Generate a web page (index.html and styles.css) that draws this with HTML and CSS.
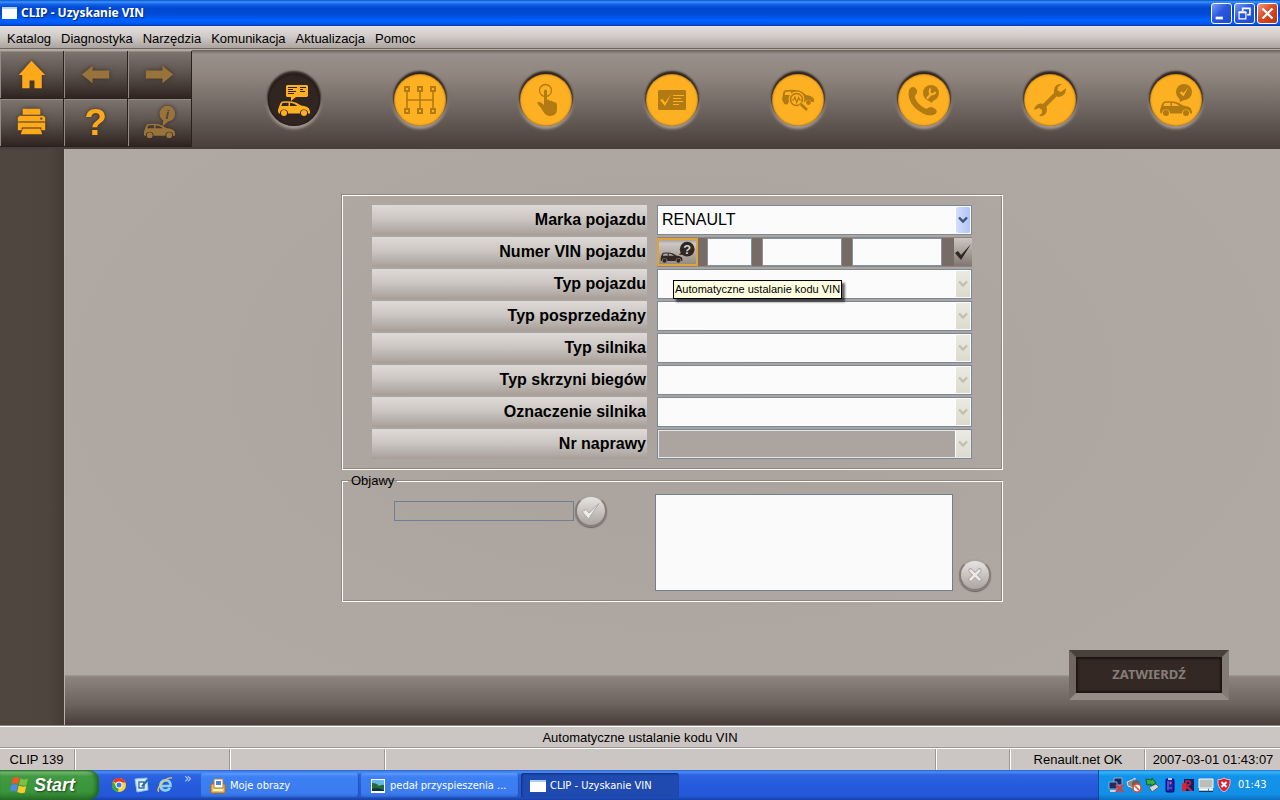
FILE: index.html
```html
<!DOCTYPE html>
<html lang="pl">
<head>
<meta charset="utf-8">
<title>CLIP - Uzyskanie VIN</title>
<link rel="stylesheet" href="styles.css">
</head>
<body>
<svg class="defs" aria-hidden="true">
  <symbol id="car" viewBox="0 0 32 15">
    <path fill-rule="evenodd" d="M4 .5Q8 0 14 .5Q18 1 23 4.500Q29 5.200 31 7.500L31.500 9L32 10.500V12.500H30A4 4 0 0 0 22 12.500H10A4 4 0 0 0 2 12.500H.8Q0 12 0 9L1.300 5Q2.500 1 4 .5ZM4.500 2L3.300 5H10.500V1.700Q7 1.500 4.500 2ZM12 1.700V5H19.500Q16.500 2 12 1.700Z"/>
    <circle cx="6" cy="12" r="3"/><circle cx="26" cy="12" r="3"/>
  </symbol>
  <symbol id="down" viewBox="0 0 10 8"><path d="M1 1.500L5 5.500L9 1.500" fill="none" stroke="currentColor" stroke-width="2.400"/></symbol>
</svg>

<header class="titlebar">
  <span class="app-icon"></span>
  <h1 class="title">CLIP - Uzyskanie VIN</h1>
  <div class="window-buttons">
    <button class="win" aria-label="Minimalizuj"><svg viewBox="0 0 21 21"><path d="M4 14h8v3H4z" fill="#fff"/></svg></button>
    <button class="win" aria-label="Przywróć"><svg viewBox="0 0 21 21" fill="none" stroke="#fff"><path d="M8.500 8V4.800h8v7H13.500" stroke-width="1.800"/><path d="M4.500 9.500h7.500v7h-7.500z" stroke-width="1.300"/><path d="M4 9h8.500" stroke-width="2"/></svg></button>
    <button class="win close" aria-label="Zamknij"><svg viewBox="0 0 21 21"><path d="M5 5l11 11M16 5l-11 11" stroke="#fff" stroke-width="2.500"/></svg></button>
  </div>
</header>

<nav class="menu">
  <button>Katalog</button><button>Diagnostyka</button><button>Narzędzia</button><button>Komunikacja</button><button>Aktualizacja</button><button>Pomoc</button>
</nav>

<div class="ribbon">
  <div class="tools">
    <button aria-label="Strona główna"><svg viewBox="0 0 64 48"><path d="M32 10L46 24.500H42.500V38H35V30H30V38H22.500V24.500H19Z"/></svg></button>
    <button aria-label="Wstecz" disabled><svg viewBox="0 0 64 48"><path d="M18 24L29 15V20H46V28H29V33Z"/></svg></button>
    <button aria-label="Dalej" disabled><svg viewBox="0 0 64 48"><path d="M46 24L35 15V20H18V28H35V33Z"/></svg></button>
    <button aria-label="Drukuj"><svg viewBox="0 0 64 48"><path d="M24 10H40L41 11V16H23V10ZM20 17H44L46 19V23H18V19ZM18 24H46V32H42V29H22V32H18ZM23 30H41L43 36H21Z"/><path d="M41 19h2v2h-2z" fill="#4a3f39"/></svg></button>
    <button aria-label="Pomoc"><svg viewBox="0 0 64 48"><text x="32" y="37" font-size="38" text-anchor="middle" class="glyph">?</text></svg></button>
    <button aria-label="Informacje o pojeździe" disabled><svg viewBox="0 0 64 48"><use href="#car" x="16" y="25" width="32" height="15"/><path d="M36 20L35 28L42 22Z"/><circle cx="40" cy="15" r="8"/><text x="40" y="20" font-size="14" text-anchor="middle" class="glyph info">i</text></svg></button>
  </div>
  <div class="modes">
    <button class="mode active" aria-label="Identyfikacja"><svg viewBox="0 0 52 52"><use href="#car" x="10" y="27" width="32" height="15"/><path d="M19 11H39L40 12V22L39 23H28L23 27V23H19L18 22V12Z"/><path d="M20 13.500h9M20 15.500h5M20 17.500h8M20 19.500h6M32 13.500h6M32 15.500h3M32 17.500h5" stroke="#302520" fill="none"/></svg></button>
    <button class="mode" aria-label="Układy"><svg viewBox="0 0 52 52"><path d="M13 17V35M26 17V35M39 17V35M13 26H39" fill="none" stroke="#b27a12" stroke-width="1.600"/><path d="M11 13h4v4h-4zM24 13h4v4h-4zM37 13h4v4h-4zM11 35h4v4h-4zM24 35h4v4h-4zM37 35h4v4h-4z" class="node"/></svg></button>
    <button class="mode" aria-label="Sterowanie"><svg viewBox="0 0 52 52"><circle cx="25.500" cy="16.500" r="6" fill="none" stroke="#b27a12" stroke-width="1.300"/><path d="M24 17Q24 15.500 25.500 15.500Q27 15.500 27 17V26Q29 25.300 30 27Q32.300 26.300 33 28Q36.500 27.500 37 31V35Q37 42 30 42Q26 42 23.500 38Q21 33.500 17.500 29.500Q16.800 28 19 27.700Q21 28 24 31Z"/></svg></button>
    <button class="mode" aria-label="Lista kontrolna"><svg viewBox="0 0 52 52"><rect x="12" y="16" width="28" height="20" rx="1.500"/><path d="M14 26L16.500 25L19 28.500L25.500 20L19 32Z" fill="#fdb022"/><path d="M27 21.500h11M27 24.500h8M27 27.500h10M27 30.500h6" stroke="#fdb022"/></svg></button>
    <button class="mode" aria-label="Analiza"><svg viewBox="0 0 52 52"><path fill-rule="evenodd" d="M12 16.500Q19 15 27 16.500Q31 17.500 34 21Q40 21.500 42 25V28H39.500A3.500 3.500 0 0 0 33 28H11.500Q9.500 27 10.500 23Q11 18 12 16.500ZM13.500 18L12.500 21H19V17.500Z"/><circle cx="36.500" cy="28.500" r="2.400"/><circle cx="14" cy="28" r="2.500"/><circle cx="24.500" cy="25.500" r="8" fill="#fdb022"/><circle cx="24.500" cy="25.500" r="6" fill="none" stroke="#b27a12" stroke-width="1.500"/><path d="M19.500 26h2l1.500-3l1.700 5.500l2-5l1 2.500h2" fill="none" stroke="#b27a12" stroke-width="1.200"/><path d="M28.500 30L35 36" stroke="#fdb022" stroke-width="5"/><path d="M28.800 30L35 36" stroke="#b27a12" stroke-width="2.800"/></svg></button>
    <button class="mode" aria-label="Asystent"><svg viewBox="0 0 52 52"><path d="M11.500 15Q14 12 17 13.500Q20.500 17 18 20.500Q16 22 17.500 25Q20.500 31 26.500 34Q29 35.500 31 33.500Q34 32 36.500 34.500Q40 36.500 38 39.500Q33 43.500 25 39.500Q14 34 11 24Q10 18 11.500 15Z"/><path d="M29 25L33.500 29L37 24Z"/><circle cx="33" cy="19" r="8"/><path d="M29.500 24L33 20" stroke="#fdb022" stroke-width="2.200" stroke-linecap="round"/><path d="M32.500 14.500Q30.500 18.500 33 20Q36 21 37.500 18" fill="none" stroke="#fdb022" stroke-width="2"/></svg></button>
    <button class="mode" aria-label="Narzędzia serwisowe"><svg viewBox="0 0 52 52"><path d="M18 34L34 18" stroke="#b27a12" stroke-width="4.500"/><path d="M38 10Q31 9 30 16Q29 22 35 23Q42 22 42 14L37 18L33.500 16.500L34 13Z"/><path d="M15 42Q22 43 23 36Q23 30 17 29.500Q11 30 10 36L15 34L18 36L18 39Z"/></svg></button>
    <button class="mode" aria-label="Kontrola końcowa"><svg viewBox="0 0 52 52"><use href="#car" x="10" y="27" width="32" height="15"/><path d="M29 23L30 28L38 24Z"/><circle cx="34" cy="18" r="8"/><path d="M29.500 18.500L32 17.500L33.500 19L38.500 13L33.500 22.500Z" fill="#fdb022"/></svg></button>
  </div>
</div>

<div class="body">
  <aside class="side"></aside>
  <main class="main">
    <form class="content">
      <section class="group vehicle">
        <div class="row"><label for="brand">Marka pojazdu</label><div class="field combo"><select id="brand"><option>RENAULT</option></select><span class="arrow live"><svg><use href="#down"/></svg></span></div></div>
        <div class="row"><label for="vin1">Numer VIN pojazdu</label>
          <div class="field vin">
            <button type="button" class="auto" aria-label="Automatyczne ustalanie kodu VIN"><svg viewBox="0 0 37 26"><use href="#car" x="0" y="13" width="24" height="12"/><path d="M24 12L20 16L30 16Z"/><circle cx="29" cy="10" r="8"/><text x="29" y="15" font-size="14" text-anchor="middle" class="glyph mark">?</text></svg></button>
            <input class="v1" id="vin1" type="text"><input class="v2" type="text" aria-label="VIN, część 2"><input class="v3" type="text" aria-label="VIN, część 3">
            <button type="button" class="confirm" aria-label="Potwierdź VIN"><svg viewBox="0 0 18 28"><path d="M1 15L4 13L7 17L17 6L7 22Z"/></svg></button>
          </div>
        </div>
        <div class="row"><label for="type">Typ pojazdu</label><div class="field combo"><select id="type" disabled><option></option></select><span class="arrow"><svg><use href="#down"/></svg></span><span class="tooltip" role="tooltip">Automatyczne ustalanie kodu VIN</span></div></div>
        <div class="row"><label for="sales">Typ posprzedażny</label><div class="field combo"><select id="sales" disabled><option></option></select><span class="arrow"><svg><use href="#down"/></svg></span></div></div>
        <div class="row"><label for="engine">Typ silnika</label><div class="field combo"><select id="engine" disabled><option></option></select><span class="arrow"><svg><use href="#down"/></svg></span></div></div>
        <div class="row"><label for="gearbox">Typ skrzyni biegów</label><div class="field combo"><select id="gearbox" disabled><option></option></select><span class="arrow"><svg><use href="#down"/></svg></span></div></div>
        <div class="row"><label for="mark">Oznaczenie silnika</label><div class="field combo"><select id="mark" disabled><option></option></select><span class="arrow"><svg><use href="#down"/></svg></span></div></div>
        <div class="row"><label for="repair">Nr naprawy</label><div class="field combo clear"><select id="repair" disabled><option></option></select><span class="arrow"><svg><use href="#down"/></svg></span></div></div>
      </section>
      <fieldset class="group symptoms">
        <legend>Objawy</legend>
        <div class="symptom-grid">
          <div class="entry"><input type="text" aria-label="Objaw"><button type="button" class="round" aria-label="Dodaj"><svg viewBox="0 0 28 28"><path d="M5 14.500L9 12.500L12 16L22 6.500L11.500 22Z" fill="#eeebe9" stroke="#b0aaa6"/></svg></button></div>
          <textarea aria-label="Lista objawów"></textarea>
          <button type="button" class="round remove" aria-label="Usuń"><svg viewBox="0 0 28 28"><path d="M9.500 9.500L18.500 18.500M18.500 9.500L9.500 18.500" stroke="#aaa4a0" stroke-width="4.500" stroke-linecap="round"/><path d="M9.500 9.500L18.500 18.500M18.500 9.500L9.500 18.500" stroke="#ebe8e6" stroke-width="2.500" stroke-linecap="round"/></svg></button>
        </div>
      </fieldset>
    </form>
    <div class="actions"><button class="submit" disabled>ZATWIERDŹ</button></div>
  </main>
</div>

<div class="hint">Automatyczne ustalanie kodu VIN</div>
<div class="status">
  <span class="s-small">CLIP 139</span><span class="s-mid"></span><span class="s-mid"></span><span class="s-fill"></span><span class="s-gap"></span><span class="s-net">Renault.net OK</span><span class="s-date">2007-03-01 01:43:07</span>
</div>

<footer class="taskbar">
  <button class="start"><svg viewBox="0 0 20 20"><path d="M3 3Q6 1 9.500 3L8 9Q5 7.500 1.500 9Z" fill="#f0582a"/><path d="M10.500 3.500Q14 5.500 18 3.500L16.500 10Q13 11.500 9 9.500Z" fill="#7cc142"/><path d="M1.200 10Q4.500 8.500 7.800 10L6.300 16.500Q3 15 0 16.500Z" fill="#4f87e8"/><path d="M8.800 10.500Q12.500 12.500 16.200 11L14.800 17.500Q11 19 7.200 17Z" fill="#fbcb2d"/></svg><span>Start</span></button>
  <div class="quick">
    <button aria-label="Chrome"><svg viewBox="0 0 16 16"><circle cx="8" cy="8" r="7" fill="#ffd43b"/><path d="M8 8L2 4.300A7 7 0 0 1 14.600 5.500H8Z" fill="#e33b2e"/><path d="M8 8L7 15A7 7 0 0 1 2 4.300L5 9.500Z" fill="#37a546"/><circle cx="8" cy="8" r="3.400" fill="#fff"/><circle cx="8" cy="8" r="2.500" fill="#3f7be0"/></svg></button>
    <button aria-label="Pokaż pulpit"><svg viewBox="0 0 16 16"><path d="M1 2L13 1L14 13L3 15Z" fill="#d9ebfb" stroke="#8fc0ec"/><path d="M5 5h5v6H5z" fill="#fff" stroke="#2873b8" stroke-width="1.400"/><path d="M7 9L13 2L15 3L9 10Z" fill="#2b6d9e"/></svg></button>
    <button aria-label="Internet Explorer"><svg viewBox="0 0 16 16"><path d="M4 9H13.500Q14 3.500 8.500 3.200Q3.500 3.500 3.300 8.800Q4 13.500 8.500 13.500Q11.500 13.300 13 11" fill="none" stroke="#8bd4ff" stroke-width="2.600"/><path d="M2 14.500Q-1 13 5 6Q11 0 15 1" fill="none" stroke="#f4c746" stroke-width="1.400"/></svg></button>
    <span class="more">»</span>
  </div>
  <div class="tasks">
    <button><svg viewBox="0 0 16 16"><path d="M1 6h14v9H1z" fill="#f4bd4d" stroke="#a9691c"/><path d="M4 1h9v9H4z" fill="#fff" stroke="#b07e3c"/><path d="M6 3h5v4H6z" fill="#4b86cf"/><path d="M3 11h10v2H3z" fill="#fff3cb"/></svg><span>Moje obrazy</span></button>
    <button><svg viewBox="0 0 16 16"><path d="M1 1h14v14H1z" fill="#fff"/><path d="M2 2h12v11H2z" fill="#65b9e6"/><path d="M2 5Q7 5 9 8Q12 6 14 7V13H2Z" fill="#246b35"/><path d="M2 11Q9 9 14 12V13H2Z" fill="#0d3140"/></svg><span>pedał przyspieszenia ...</span></button>
    <button class="current"><svg viewBox="0 0 16 16"><path d="M0 2h16v12H0z" fill="#fff"/><path d="M0 2h16v2H0z" fill="#a9cef5"/></svg><span>CLIP - Uzyskanie VIN</span></button>
  </div>
  <div class="tray">
    <svg viewBox="0 0 16 16"><path d="M6 1h8v7H6z" fill="#16285c" stroke="#9aaccd"/><path d="M1 5h8v7H1z" fill="#1c2c62" stroke="#8fa4ce"/><path d="M2 14h7" stroke="#cad3e6" stroke-width="2"/><path d="M8 8L15 15M15 8L8 15" stroke="#e33b34" stroke-width="2.400"/></svg>
    <svg viewBox="0 0 16 16"><path d="M1 5L6 3L9 1V13L5 10L2 9Z" fill="#8b8b8b" stroke="#dedede"/><circle cx="10" cy="7" r="4" fill="#65615f"/><circle cx="11" cy="11" r="4" fill="#fff" stroke="#d75233" stroke-width="1.600"/><path d="M8.500 8.500L13.500 13.500" stroke="#d75233" stroke-width="1.500"/></svg>
    <svg viewBox="0 0 16 16"><path d="M5 10L12 7L15 10L8 15Z" fill="#cbd5da" stroke="#54646c"/><path d="M2 2L8 3V1L12 6L7 9V7L3 8Z" fill="#39b044" stroke="#106427"/></svg>
    <svg viewBox="0 0 16 16"><rect x="4" y="2" width="8" height="13" rx="1" fill="#1823b1" stroke="#050c62"/><path d="M6 1h4v2H6z" fill="#b9c7ed"/><path d="M6 4v9" stroke="#5e8afb"/><path d="M7 6h3M8.500 4.500v3M7 11h3" stroke="#ee5573"/></svg>
    <svg viewBox="0 0 16 16"><path d="M4 2h10v12H4z" fill="#151f65"/><path d="M2 6h4v8H2zM8 9l5 5H10L6 10z" fill="#d72535"/><path d="M6 12V4h3q3 2 0 4H7" stroke="#d72535" fill="none" stroke-width="1.500"/></svg>
    <svg viewBox="0 0 16 16"><path d="M1 2h14v9H1z" fill="#bcbcb8" stroke="#f7f7f7"/><path d="M1 12.500h9M11 12.500h4" stroke="#fff" stroke-width="2"/><path d="M1 14.500h14" stroke="#333"/></svg>
    <svg viewBox="0 0 16 16"><path d="M8 1Q11 3 14 2.500Q15 11 8 15Q1 11 2 2.500Q5 3 8 1Z" fill="#d82032" stroke="#efb7bd"/><path d="M5.500 5L10.500 10M10.500 5L5.500 10" stroke="#fff" stroke-width="2"/></svg>
    <time>01:43</time>
  </div>
</footer>
</body>
</html>
```
FILE: styles.css
```css
* { box-sizing: border-box; }
body {
  margin: 0;
  min-height: 100vh;
  display: flex;
  flex-direction: column;
  font: 13px/16px "Liberation Sans", Arial, sans-serif;
  color: #000;
  background: #cbc6c3;
}
button, input, select, textarea { font: inherit; margin: 0; padding: 0; border: 0; border-radius: 0; color: inherit; }
button { background: none; }
svg { display: block; }
.defs { position: absolute; width: 0; height: 0; }
.glyph { font-family: "Liberation Sans", Arial, sans-serif; font-weight: bold; }

.titlebar {
  display: flex;
  align-items: center;
  height: 26px;
  padding: 0 2px;
  gap: 4px;
  background: linear-gradient(#0a50c8, #3d95ff 2px, #1464ea 4px, #0047cf 8px, #004bd6 14px, #0060ff 20px, #005cf8 23px, #0039b8);
}
.app-icon { width: 15px; height: 12px; background: #fff; border-top: 2px solid #b9d6fb; }
.title {
  flex: 1;
  margin: 0;
  color: #fff;
  font: bold 12px/16px "Noto Sans", "Open Sans", sans-serif;
  text-shadow: 1px 1px 1px #002a80;
}
.window-buttons { display: flex; gap: 2px; }
.win {
  width: 21px;
  height: 21px;
  border: 1px solid #fff;
  border-radius: 3px;
  background: linear-gradient(135deg, #7b9cf5, #2a58dc 45%, #1c49d2);
}
.win svg { width: 19px; height: 19px; }
.close { background: linear-gradient(135deg, #ef9a7e, #d94a25 45%, #b93412); }

.menu {
  display: flex;
  align-items: center;
  gap: 10px;
  height: 23px;
  padding: 3px 7px 0;
  background: linear-gradient(#e2dfdd, #cfcac7 50%, #aaa39e);
  border-bottom: 1px solid #6f6660;
}

.ribbon {
  display: flex;
  height: 100px;
  border-top: 1px solid #b5aca6;
  background: linear-gradient(#6b615b, #9a908b 4px, #90867f 25%, #6f6560 60%, #483d37);
}
.tools { display: grid; grid-template-columns: repeat(3, 64px); grid-template-rows: 48px 48px; background: #b1a7a1; padding-top: 1px; align-self: flex-start; }
.tools button {
  fill: #fda91a;
  border: solid #2b201b;
  border-width: 0 1px 1px 0;
  box-shadow: inset 1px 1px #968b84;
  background: linear-gradient(#7f756f, #5f5550 45%, #2f2420);
}
.tools svg { width: 63px; height: 47px; filter: drop-shadow(0 0 2px #3a2c22); }
.tools button:disabled { fill: #98743c; }
.info { fill: #51453a; font-style: italic; }
.modes { flex: 1; display: flex; justify-content: space-between; align-items: center; padding: 0 78px 0 76px; }
.mode {
  width: 52px;
  height: 52px;
  border-radius: 50%;
  background: #fdb022;
  fill: #b27a12;
  box-shadow: inset 0 0 2px #6e4508, 0 -2px 2px 1px #2f241f, 0 2px 3px 1px #a89c92;
}
.mode svg { width: 52px; height: 52px; }
.mode.active { background: #302520; fill: #fdb022; box-shadow: inset 0 0 2px #120c09, 0 -2px 2px 1px #2f241f, 0 2px 3px 1px #a89c92; }
.node { fill: #fdb022; stroke: #b27a12; stroke-width: 2; }

.body { flex: 1; display: flex; background: #4e443e; border-bottom: 1px solid #8d8580; }
.side { width: 64px; background: linear-gradient(90deg, #4f4640, #4e453f 75%, #463c36); }
.main {
  flex: 1;
  display: flex;
  flex-direction: column;
  justify-content: space-between;
  border-left: 1px solid #b9b1ac;
  background: radial-gradient(ellipse at center 40%, #aaa29c, #b0a8a3 75%);
}
.content { width: 661px; margin: 46px auto 0; }
.group { margin: 0; border: 1px solid #fffdf6; box-shadow: -1px -1px #90887f, inset -1px -1px #90887f; }
.vehicle { display: grid; gap: 2px; padding: 9px 30px 10px 29px; }
.row { display: flex; gap: 10px; }
.row label {
  flex: 1;
  height: 30px;
  padding-right: 1px;
  text-align: right;
  font-weight: bold;
  font-size: 16px;
  line-height: 30px;
  background: linear-gradient(#dedad7, #c9c4c0 50%, #a69e99);
}
.field { width: 315px; height: 30px; position: relative; }
.combo { border: 1px solid #7b8a9b; }
.combo select {
  appearance: none;
  width: 100%;
  height: 100%;
  padding: 0 24px 0 4px;
  font-size: 16px;
  background: #fcfbfb;
  opacity: 1;
}
.clear select { background: #aca49f; border: 1px solid #e8e5e2; }
.arrow {
  position: absolute;
  top: 1px;
  right: 1px;
  bottom: 1px;
  width: 14px;
  display: grid;
  place-items: center;
  pointer-events: none;
  color: #c2c1b0;
  background: linear-gradient(#ecebe2, #dcdacd);
  box-shadow: -1px 0 #fff;
}
.arrow svg { width: 10px; height: 8px; }
.live { color: #3d517c; border-radius: 2px; background: linear-gradient(90deg, #d2defd, #b1c4f6); }
.vin { display: flex; background: #776b65; border: solid #8e8580; border-width: 1px 0; }
.vin input { border: 1px solid #8492a2; background: #fcfbfb; min-width: 0; padding: 0 4px; }
.v1 { width: 45px; margin-left: 9px; }
.v2 { width: 80px; margin-left: 10px; }
.v3 { width: 90px; margin-left: 10px; }
.auto { width: 41px; border: 2px solid #dfa33b; background: linear-gradient(#a8a09a, #cdc7c3 15%, #958b85); fill: #302622; }
.auto svg { width: 37px; height: 24px; }
.mark { fill: #d8d3cf; }
.confirm { width: 18px; margin-left: auto; fill: #302622; background: linear-gradient(#ccc7c3, #81766f); }
.confirm svg { width: 18px; height: 28px; }
.tooltip {
  position: absolute;
  z-index: 2;
  left: 15px;
  top: 10px;
  padding: 1px;
  border: 1px solid #000;
  font-size: 11px;
  line-height: 15px;
  white-space: nowrap;
  background: #ffffe1;
  box-shadow: 3px 3px 2px #0009;
}
.symptoms { margin-top: 3px; padding: 0 11px 10px 51px; min-height: 129px; }
.symptoms legend { margin-left: -46px; padding: 0 3px; }
.symptom-grid { display: grid; grid-template-columns: 1fr 298px 32px; gap: 6px; padding-top: 5px; }
.entry { display: flex; gap: 1px; align-self: start; align-items: center; padding-top: 1px; }
.entry input { width: 180px; height: 20px; padding: 0 4px; background: none; border: 1px solid #6f7f90; }
textarea { height: 97px; resize: none; background: #fbfafa; border: 1px solid #6f7f90; }
.round {
  width: 32px;
  height: 32px;
  border: 2px solid #857c77;
  border-top-color: #aaa29d;
  border-radius: 50%;
  background: linear-gradient(#e6e3e1, #aca5a1);
  box-shadow: 0 1px 1px #6c625d;
}
.round svg { width: 28px; height: 28px; }
.remove { align-self: end; }
.actions {
  display: flex;
  justify-content: flex-end;
  align-items: flex-end;
  height: 50px;
  padding: 0 51px 25px 0;
  background: linear-gradient(#a39b96, #8d837e 2px, #6c625d 60%, #483d37);
}
.submit {
  width: 160px;
  height: 50px;
  flex: none;
  padding-bottom: 2px;
  border: 7px solid;
  border-color: #4a403a #847a74 #968c87 #70665f;
  box-shadow: inset 0 0 2px 2px #1d1512;
  color: #867d77;
  background: #332824;
  font: bold 13px/16px "Noto Sans", "Open Sans", sans-serif;
}

.hint { height: 22px; border-top: 1px solid #fff; text-align: center; line-height: 22px; background: #cbc6c3; }
.status { display: flex; height: 22px; border-top: 1px solid #fff; line-height: 22px; box-shadow: 0 -1px #9e9893; }
.status span { border-right: 1px solid #fff; box-shadow: inset -1px 0 #9e9893; white-space: nowrap; text-align: center; }
.status .s-small { width: 76px; padding-right: 2px; }
.status .s-mid { width: 155px; }
.status .s-fill { flex: 1; }
.status .s-gap { width: 74px; }
.status .s-net { width: 135px; }
.status .s-date { width: 134px; border: 0; box-shadow: none; }

.taskbar {
  display: flex;
  height: 30px;
  color: #fff;
  font: 11px/16px "DejaVu Sans Condensed", "DejaVu Sans", sans-serif;
  background: linear-gradient(#2b62cf, #4a8cf4 2px, #2c63e0 5px, #245adb 60%, #2358d8 26px, #1941a5);
}
.start {
  display: flex;
  align-items: center;
  gap: 4px;
  width: 99px;
  padding-left: 10px;
  border-radius: 0 10px 10px 0;
  background: linear-gradient(#347f34, #7fbf7a 2px, #429a42 6px, #3a943a 22px, #28702a);
  box-shadow: inset -3px 0 4px #1d6420;
  font: italic bold 18px/20px "Liberation Sans", Arial, sans-serif;
  text-shadow: 1px 1px 2px #1b3f1b;
}
.start svg { width: 20px; height: 20px; }
.quick { display: flex; align-items: center; gap: 7px; width: 102px; padding-left: 12px; }
.quick svg { width: 16px; height: 16px; }
.more { margin-left: 4px; font-size: 14px; align-self: flex-start; color: #b9d2fb; }
.tasks { flex: 1; display: flex; gap: 2px; padding: 3px 0 2px; }
.tasks button {
  display: flex;
  align-items: center;
  gap: 4px;
  width: 158px;
  padding-left: 9px;
  border-radius: 3px;
  white-space: nowrap;
  background: linear-gradient(#5f9bfb, #3c80f4 4px, #3b7cf0 80%, #2d66d6);
  box-shadow: inset -1px -1px 1px #2453b4;
}
.tasks svg { width: 16px; height: 16px; }
.tasks .current { background: #1f4bb0; box-shadow: inset 1px 1px 2px #10307b; }
.tray {
  display: flex;
  align-items: center;
  gap: 2px;
  width: 182px;
  padding-left: 9px;
  border-left: 1px solid #0b4796;
  background: linear-gradient(#0f77d9, #38b5f8 2px, #1292ea 6px, #1290e8 80%, #0d6fc0);
}
.tray svg { width: 16px; height: 16px; }
.tray time { margin-left: 4px; }
```
